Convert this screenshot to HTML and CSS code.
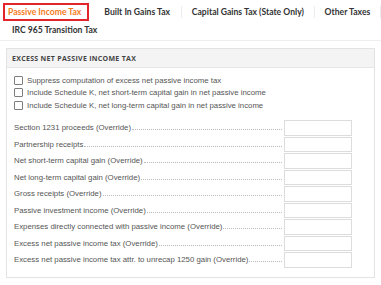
FILE: index.html
```html
<!DOCTYPE html>
<html>
<head>
<meta charset="utf-8">
<link rel="stylesheet" href="styles.css">
</head>
<body>
<div class="tabs">
  <div class="tab-row">
    <div class="tab active">Passive Income Tax</div>
    <div class="tab">Built In Gains Tax</div>
    <span class="sep"></span>
    <div class="tab">Capital Gains Tax (State Only)</div>
    <span class="sep"></span>
    <div class="tab">Other Taxes</div>
    <span class="sep"></span>
  </div>
  <div class="tab-row row2">
    <div class="tab">IRC 965 Transition Tax</div>
  </div>
</div>
<div class="panel">
  <div class="panel-head">EXCESS NET PASSIVE INCOME TAX</div>
  <div class="panel-body">
    <div class="checks">
      <label class="check"><span class="box"></span>Suppress computation of excess net passive income tax</label>
      <label class="check"><span class="box"></span>Include Schedule K, net short-term capital gain in net passive income</label>
      <label class="check"><span class="box"></span>Include Schedule K, net long-term capital gain in net passive income</label>
    </div>
    <div class="fields">
      <div class="field"><span class="lbl">Section 1231 proceeds (Override)</span><span class="dots"></span><span class="inp"></span></div>
      <div class="field"><span class="lbl">Partnership receipts</span><span class="dots"></span><span class="inp"></span></div>
      <div class="field"><span class="lbl">Net short-term capital gain (Override)</span><span class="dots"></span><span class="inp"></span></div>
      <div class="field"><span class="lbl">Net long-term capital gain (Override)</span><span class="dots"></span><span class="inp"></span></div>
      <div class="field"><span class="lbl">Gross receipts (Override)</span><span class="dots"></span><span class="inp"></span></div>
      <div class="field"><span class="lbl">Passive investment income (Override)</span><span class="dots"></span><span class="inp"></span></div>
      <div class="field"><span class="lbl">Expenses directly connected with passive income (Override)</span><span class="dots"></span><span class="inp"></span></div>
      <div class="field"><span class="lbl">Excess net passive income tax (Override)</span><span class="dots"></span><span class="inp"></span></div>
      <div class="field"><span class="lbl">Excess net passive income tax attr. to unrecap 1250 gain (Override)</span><span class="dots"></span><span class="inp"></span></div>
    </div>
  </div>
</div>
</body>
</html>
```
FILE: styles.css
```css
* { box-sizing: border-box; }
html, body { margin: 0; padding: 0; background: #fff; }
body { font-family: "Liberation Sans", Arial, sans-serif; width: 381px; height: 285px; overflow: hidden; }

.tabs { padding: 3px 0 0 3px; border-bottom: 1px solid #eeeeee; height: 41px; }
.tab-row { display: flex; align-items: center; height: 18px; }
.tab {
  font-family: Lato, sans-serif; font-weight: 700; font-size: 8.6px; color: #333;
  padding: 0 8px; height: 18px; line-height: 15px; border: 2px solid transparent; white-space: nowrap;
}
.tab.active { color: #f47b20; border-color: #e2262b; padding: 0 6px 0 3px; }
.tab-row .tab:nth-child(2) { padding-left: 13px; padding-right: 9px; }
.sep { width: 1px; height: 12px; background: #ececec; }
.row2 { margin-top: 1px; padding-left: 7px; height: 16px; }
.row2 .tab { padding: 0 2px 0 0; }

.panel { margin: 7px 6px 0 6px; border: 1px solid #e3e3e3; height: 230px; }
.panel-head {
  background: #f4f4f5; border-bottom: 1px solid #e6e6e6; height: 19px;
  font-family: "Open Sans", sans-serif; font-weight: 700; font-size: 7px; letter-spacing: 0.3px;
  color: #444; padding: 5px 0 0 5px;
}
.panel-body { padding: 7px 0 0 7px; }
.checks { display: flex; flex-direction: column; gap: 2.6px; }
.check { display: flex; align-items: center; font-size: 7.8px; color: #555; height: 10px; }
.box { width: 9px; height: 9px; border: 1px solid #7d7d7d; border-radius: 1px; margin-right: 4px; background: #fff; }

.fields { margin-top: 10px; display: flex; flex-direction: column; gap: 1px; }
.field { display: flex; align-items: center; height: 15.5px; font-size: 7.8px; color: #555; }
.lbl { white-space: nowrap; }
.dots { flex: 1; border-bottom: 1px dotted #bbbbbb; margin: 4px 2px 0 1px; height: 1px; }
.inp { width: 68px; height: 15.5px; border: 1px solid #dcdcdc; margin-right: 22px; background: #fff; }
```
